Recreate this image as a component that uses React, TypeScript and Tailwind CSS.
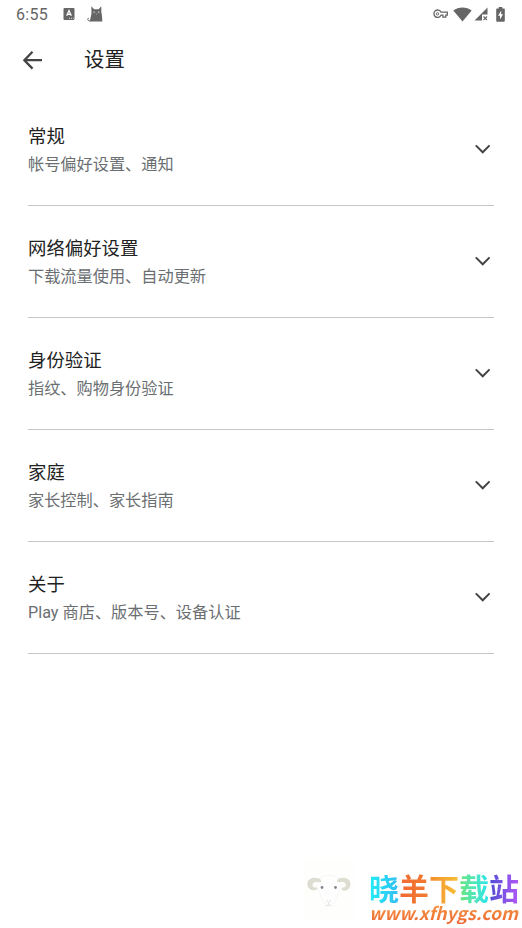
type Section = {
  title: string;
  summary: string;
};

const sections: Section[] = [
  { title: "常规", summary: "帐号偏好设置、通知" },
  { title: "网络偏好设置", summary: "下载流量使用、自动更新" },
  { title: "身份验证", summary: "指纹、购物身份验证" },
  { title: "家庭", summary: "家长控制、家长指南" },
  { title: "关于", summary: "Play 商店、版本号、设备认证" },
];

function StatusBar() {
  return (
    <div className="flex h-7 items-center pl-4 pr-4 text-[#666]">
      <span className="w-[47px] pt-[2px] text-[16px] leading-7 tracking-[0.3px]">6:55</span>

      {/* Keyboard notification */}
      <svg className="h-3 w-3" viewBox="0 0 12 12">
        <rect x="0.5" y="0" width="11" height="12" rx="1" fill="currentColor" />
        <path d="M3.7 7.8 6 2.6l2.3 5.2M4.5 6.3h3" fill="none" stroke="#fff" strokeWidth="1.3" />
        <path d="M6 10.3h1M8 10.3h1M10 10.3h1" stroke="#fff" strokeWidth="0.8" />
      </svg>

      {/* Cat notification */}
      <svg className="ml-3 h-4 w-4" viewBox="0 0 16 16">
        <path
          d="M4.300.2 7.200 3.200h4.500L14.200.2c.2 2.300.2 4.300.1 5.800.7 3 1 6 1 9.500H2.900C3.300 11.500 4.600 9 4.500 6.500Z"
          fill="currentColor"
        />
        <path d="M3.500 14.900C1.400 15.200.4 14 .8 12.700l1-.5" fill="none" stroke="currentColor" />
        <circle cx="7.100" cy="6.100" r="0.700" fill="#fff" />
        <circle cx="11.800" cy="6.100" r="0.700" fill="#fff" />
        <path d="m8.800 7.500.7.600.7-.6" fill="none" stroke="#ddd" strokeWidth="0.500" />
      </svg>

      <div className="ml-auto flex items-center">
        <svg className="h-[10px] w-[15px]" viewBox="0 0 15 10">
          <path
            d="M8 3.200h6.300v3h-1.500v2h-2.900v-2H8A3.700 3.700 0 1 1 8 3.200Z"
            fill="none"
            stroke="currentColor"
            strokeWidth="1.300"
          />
          <circle cx="4.500" cy="4.800" r="1.200" fill="none" stroke="currentColor" />
        </svg>
        <svg className="ml-[5px] h-[15px] w-[19px]" viewBox="0 0 19 15">
          <path d="M.3 3.600C5.500-.6 13.500-.6 18.700 3.600L9.500 14.600Z" fill="currentColor" />
        </svg>
        <svg className="ml-[2px] h-[14px] w-[14px]" viewBox="0 0 14 14">
          <path d="M13.500.5v7H8V13.500H.5Z" fill="currentColor" />
          <path d="m9.500 9.500 3.500 3.500m0-3.500L9.500 13" stroke="currentColor" strokeWidth="1.100" />
        </svg>
        <svg className="ml-[8px] mr-px h-[15px] w-[9px]" viewBox="0 0 9 15">
          <path
            d="M2.700 0h3.600v1.500H8q.8 0 .8.800v11.500q0 .9-.9.900H1.100q-.9 0-.9-.9V2.300q0-.8.800-.8h1.700Z"
            fill="currentColor"
          />
          <path d="M5.300 3.500 2 8.800h2V12.500l3.100-5.300h-2Z" fill="#fff" />
        </svg>
      </div>
    </div>
  );
}

function Header() {
  return (
    <header className="flex h-16 items-center pl-[23px]">
      <svg className="h-5 w-5 text-[#444]" viewBox="0 0 20 20">
        <path
          d="M19 10.200H1.800M9.500 1.800 1.400 10.200l8.100 8.400"
          fill="none"
          stroke="currentColor"
          strokeWidth="2.300"
        />
      </svg>
      <h1 className="ml-[41px] text-[20.4px] leading-7 text-[#222]">设置</h1>
    </header>
  );
}

function SectionRow({ title, summary }: Section) {
  return (
    <li className="flex h-28 items-start justify-between border-b border-[#c6c6c6]">
      <div className="pt-[29px]">
        <h2 className="text-[18.4px] leading-7 text-[#222]">{title}</h2>
        <p className="text-[16.2px] leading-7 text-[#6b6f72]">{summary}</p>
      </div>
      <svg className="mr-[3px] mt-[50px] h-[10px] w-[16px] text-[#444]" viewBox="0 0 16 10">
        <path d="m.8 1.400 6.900 6.900 6.900-6.900" fill="none" stroke="currentColor" strokeWidth="2" />
      </svg>
    </li>
  );
}

function SheepLogo() {
  return (
    <svg className="h-[60px] w-[52px]" viewBox="0 0 52 60">
      <rect width="52" height="60" fill="#fefefd" />
      <path d="M17 18Q26 12 35 18l3 8-6 16q-6 7-12 0l-6-16Z" fill="#fefefe" stroke="#f8f7f5" />
      {/* Horns */}
      <path
        d="M18 20C14 16 4 17 4.300 24.500c.3 5 7 7.500 10.200 4.500l-1-1.500c-3 .5-5-2-3.500-4 1.500-1.800 4.500-1.500 8-1Z"
        fill="#deddd1"
      />
      <path
        d="M34 20c4-4 14-3 13.500 4.500-.3 5-5.500 8-9 5l.5-2c3 .5 5-2 3.500-4-1.500-1.800-4.500-1.500-8-1Z"
        fill="#deddd1"
      />
      <circle cx="19" cy="27.500" r="1.400" fill="#85868b" />
      <circle cx="32.500" cy="27.500" r="1.400" fill="#85868b" />
      <path d="m23 40 2.500 2 2.500-2M25.500 42v3l-3 1m3-1 3 1" fill="none" stroke="#e6e4e0" />
    </svg>
  );
}

function SiteBadge() {
  return (
    <div className="absolute left-[303px] top-[860px] flex">
      <SheepLogo />
      <div className="ml-[14px] pt-[14px] whitespace-nowrap">
        <div className="flex text-[30px] font-bold leading-[31px] *:bg-clip-text *:text-transparent">
          <span className="bg-linear-to-r from-[#20edf5] to-[#32bdf4]">晓</span>
          <span className="bg-linear-to-r from-[#f36a32] to-[#f17b31]">羊</span>
          <span className="bg-linear-to-r from-[#f28b30] to-[#f6c136]">下</span>
          <span className="bg-linear-to-r from-[#6be579] to-[#27e5ed]">载</span>
          <span className="bg-linear-to-r from-[#4b4bd4] to-[#b357f7]">站</span>
        </div>
        <div className="-mt-[3px] w-fit bg-linear-to-b from-[#f49a43] to-[#ee6630] bg-clip-text pr-1 font-['Noto_Sans_CJK_SC',sans-serif] text-[17.600px] font-bold italic leading-[22px] text-transparent">
          www.xfhygs.com
        </div>
      </div>
    </div>
  );
}

export default function App() {
  return (
    <div className="relative h-[928px] w-[522px] overflow-hidden bg-white font-[Roboto,'Noto_Sans_CJK_SC',sans-serif]">
      <StatusBar />
      <Header />
      <ul className="mx-7 mt-[2px]">
        {sections.map((section) => (
          <SectionRow key={section.title} {...section} />
        ))}
      </ul>
      <SiteBadge />
    </div>
  );
}
